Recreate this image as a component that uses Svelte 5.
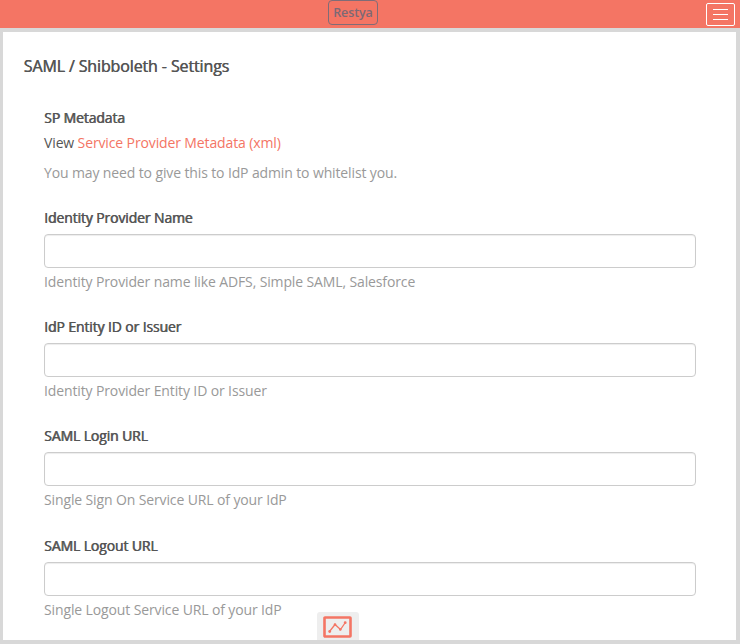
<script>
  const fields = [
    { id: 'idp-name', label: 'Identity Provider Name', hint: 'Identity Provider name like ADFS, Simple SAML, Salesforce' },
    { id: 'idp-entity', label: 'IdP Entity ID or Issuer', hint: 'Identity Provider Entity ID or Issuer' },
    { id: 'login-url', label: 'SAML Login URL', hint: 'Single Sign On Service URL of your IdP' },
    { id: 'logout-url', label: 'SAML Logout URL', hint: 'Single Logout Service URL of your IdP' }
  ];
</script>

<div class="app">
  <header>
    <div class="brand">Restya</div>
    <button class="menu" aria-label="Menu">
      <span></span><span></span><span></span>
    </button>
  </header>

  <main>
    <h1>SAML / Shibboleth - Settings</h1>
    <form>
      <section class="metadata">
        <div class="label">SP Metadata</div>
        <p class="view">View <a href="#metadata">Service Provider Metadata (xml)</a></p>
        <p class="hint">You may need to give this to IdP admin to whitelist you.</p>
      </section>
      {#each fields as field}
        <section class="field">
          <label class="label" for={field.id}>{field.label}</label>
          <input id={field.id} type="text" />
          <p class="hint">{field.hint}</p>
        </section>
      {/each}
    </form>
    <div class="activity">
      <svg width="29" height="22" viewBox="0 0 29 22" fill="none" stroke="#f47564">
        <rect x="1.5" y="1.5" width="26" height="19" rx="0.5" stroke-width="2.6" />
        <path d="M6.5 15.5L12 8.5L17.5 13.5L22 7" stroke-width="1.3" />
        <g fill="#f47564" stroke="none">
          <circle cx="6.7" cy="15.5" r="1.4" />
          <circle cx="12" cy="8.5" r="1.3" />
          <circle cx="17.3" cy="13.5" r="1.3" />
          <circle cx="22.2" cy="6.7" r="1.4" />
        </g>
      </svg>
    </div>
  </main>
</div>

<style>
  :global(body) {
    margin: 0;
    overflow: hidden;
  }
  .app {
    box-sizing: border-box;
    width: 740px;
    height: 644px;
    display: flex;
    flex-direction: column;
    background: #d8d8d8;
    color: #555;
    font: 14px/20px "Open Sans", sans-serif;
    letter-spacing: -0.125px;
  }
  header {
    height: 28px;
    flex: none;
    display: flex;
    justify-content: space-between;
    padding: 0 5px 0 328px;
    background: #f47564;
  }
  .brand {
    box-sizing: border-box;
    width: 50px;
    height: 25px;
    border: 1px solid #806c77;
    border-radius: 4px;
    color: #7c6975;
    font: 600 12.5px/23px "Open Sans", sans-serif;
    letter-spacing: -0.1px;
    text-align: center;
  }
  .menu {
    box-sizing: border-box;
    width: 29px;
    height: 23px;
    margin: 3px 0 0;
    padding: 0;
    display: flex;
    flex-direction: column;
    align-items: center;
    justify-content: center;
    gap: 4px;
    border: 1px solid #fff;
    border-radius: 2px;
    background: none;
  }
  .menu span {
    width: 15px;
    height: 1px;
    background: #fff;
  }
  main {
    position: relative;
    box-sizing: border-box;
    flex: 1;
    margin: 4px 4px 4px 3px;
    padding: 24px 40px 0 20px;
    background: #fff;
  }
  h1 {
    margin: 0 0 0 0.5px;
    font-size: 16px;
    font-weight: 400;
    line-height: 20px;
    text-shadow: 0.5px 0 #555;
  }
  form {
    padding: 32px 0 0 21px;
  }
  .label {
    display: block;
    text-shadow: 0.6px 0 #555;
  }
  p {
    margin: 0;
  }
  .view {
    margin-top: 5px;
  }
  a {
    color: #f47564;
    text-decoration: none;
  }
  .hint {
    color: #999;
  }
  .metadata .hint {
    margin-top: 10px;
  }
  .field {
    height: 84.2px;
    margin-top: 25px;
  }
  input {
    display: block;
    box-sizing: border-box;
    width: 652px;
    height: 34px;
    margin: 6px 0 4px;
    border: 1px solid #ccc;
    border-radius: 4px;
    background: #fff;
    box-shadow: inset 0 1px 1px rgba(0, 0, 0, 0.075);
  }
  .activity {
    position: absolute;
    left: 314px;
    bottom: 0;
    box-sizing: border-box;
    width: 42px;
    height: 28px;
    padding: 4px 0 0 6px;
    border-radius: 3px 3px 0 0;
    background: #eee;
  }
  svg {
    display: block;
  }
</style>
